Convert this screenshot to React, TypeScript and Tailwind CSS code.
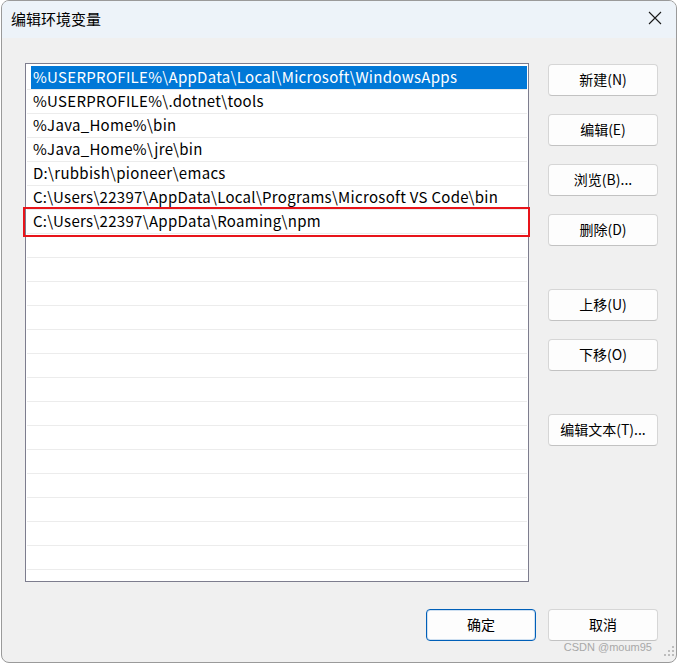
const paths = [
  '%USERPROFILE%\\AppData\\Local\\Microsoft\\WindowsApps',
  '%USERPROFILE%\\.dotnet\\tools',
  '%Java_Home%\\bin',
  '%Java_Home%\\jre\\bin',
  'D:\\rubbish\\pioneer\\emacs',
  'C:\\Users\\22397\\AppData\\Local\\Programs\\Microsoft VS Code\\bin',
  'C:\\Users\\22397\\AppData\\Roaming\\npm',
];

const emptyRows = Array.from({ length: 14 });

const Btn = ({ label, primary = false }: { label: string; primary?: boolean }) => (
  <button
    className={
      'w-[110px] h-[32px] rounded-[4px] bg-[#fdfdfd] text-[14px] text-black flex items-center justify-center pb-[1px] ' +
      (primary ? 'border border-[#005fb8] shadow-[inset_0_0_0_1px_#cfe0f1]' : 'border border-[#d6d6d6] border-b-[#c2c2c2]')
    }
  >
    {label}
  </button>
);

const CloseIcon = () => (
  <svg width="14" height="14" viewBox="0 0 14 14" fill="none">
    <path d="M1 1L13 13M13 1L1 13" stroke="#1a1a1a" strokeWidth="1.1" />
  </svg>
);

const Grip = () => (
  <svg width="12" height="12" viewBox="0 0 12 12">
    <rect x="9" y="1" width="2" height="2" fill="#bdbdbd" />
    <rect x="5" y="5" width="2" height="2" fill="#bdbdbd" />
    <rect x="9" y="5" width="2" height="2" fill="#bdbdbd" />
    <rect x="1" y="9" width="2" height="2" fill="#bdbdbd" />
    <rect x="5" y="9" width="2" height="2" fill="#bdbdbd" />
    <rect x="9" y="9" width="2" height="2" fill="#bdbdbd" />
  </svg>
);

export default function App() {
  return (
    <div
      className="w-[677px] h-[664px] bg-white"
      style={{ fontFamily: '"Noto Sans CJK SC", "Noto Sans", sans-serif' }}
    >
      <div className="ml-[1px] w-[676px] h-[663px] rounded-[8px] border border-[#9a9a9a] overflow-hidden flex flex-col bg-[#f0f0f0]">
        {/* title bar */}
        <div className="h-[37px] bg-[#edf3f9] flex items-center justify-between pl-[9px] pr-[14px] pb-[3px] shrink-0">
          <span className="text-[15px] text-black leading-none">编辑环境变量</span>
          <CloseIcon />
        </div>

        {/* body */}
        <div className="flex pl-[23px] pt-[25px]">
          <div className="relative w-[504px] h-[519px] border border-[#7d7d8e] bg-white pt-[2px] pl-[1px] pr-[1px]">
            {paths.map((p, i) => (
              <div key={p} className="h-[24px] border-b border-[#ececec] flex">
                <div
                  className={
                    'h-[23px] flex items-center pl-[2px] pb-[2px] ml-[4px] text-[15px] tracking-[0.3px] leading-none whitespace-nowrap ' +
                    (i === 0 ? 'bg-[#0078d7] text-white w-[496px]' : 'text-black')
                  }
                >
                  {p}
                </div>
              </div>
            ))}
            {emptyRows.map((_, i) => (
              <div key={i} className="h-[24px] border-b border-[#ececec]" />
            ))}
            <div className="absolute left-[-3px] top-[143px] w-[507px] h-[30px] border-2 border-[#e8141a]" />
          </div>

          <div className="ml-[19px] mt-[1px] flex flex-col">
            <div className="flex flex-col gap-[18px]">
              <Btn label="新建(N)" />
              <Btn label="编辑(E)" />
              <Btn label="浏览(B)..." />
              <Btn label="删除(D)" />
            </div>
            <div className="mt-[43px] flex flex-col gap-[18px]">
              <Btn label="上移(U)" />
              <Btn label="下移(O)" />
            </div>
            <div className="mt-[43px]">
              <Btn label="编辑文本(T)..." />
            </div>
          </div>
        </div>

        {/* footer */}
        <div className="mt-[27px] flex justify-end gap-[12px] pr-[18px]">
          <Btn label="确定" primary />
          <Btn label="取消" />
        </div>
        <div className="flex justify-end items-end pr-[1px] mt-[1px]">
          <span
            className="text-[11px] text-[#a8a8a8] mr-[11px] leading-none mb-[4px]"
            style={{ fontFamily: '"Liberation Sans", Arial, sans-serif' }}
          >
            CSDN @moum95
          </span>
          <Grip />
        </div>
      </div>
    </div>
  );
}
